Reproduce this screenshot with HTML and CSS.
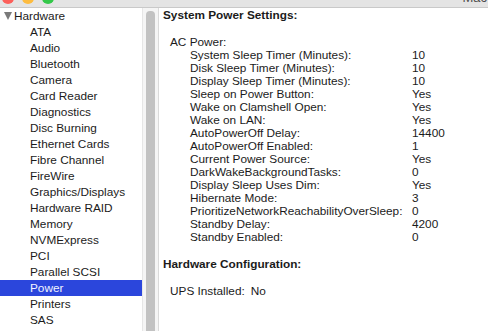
FILE: index.html
```html
<!DOCTYPE html>
<html lang="en">
<head>
  <meta charset="UTF-8">
  <title>System Information</title>
  <link rel="stylesheet" href="styles.css">
</head>
<body>
  <div class="titlebar">
    <div class="lights">
      <span class="light red"></span>
      <span class="light yellow"></span>
      <span class="light green"></span>
    </div>
    <span class="title">Mac</span>
  </div>

  <div class="window">
    <div class="sidebar">
      <div class="item group"><span class="arrow"></span>Hardware</div>
      <div class="item">ATA</div>
      <div class="item">Audio</div>
      <div class="item">Bluetooth</div>
      <div class="item">Camera</div>
      <div class="item">Card Reader</div>
      <div class="item">Diagnostics</div>
      <div class="item">Disc Burning</div>
      <div class="item">Ethernet Cards</div>
      <div class="item">Fibre Channel</div>
      <div class="item">FireWire</div>
      <div class="item">Graphics/Displays</div>
      <div class="item">Hardware RAID</div>
      <div class="item">Memory</div>
      <div class="item">NVMExpress</div>
      <div class="item">PCI</div>
      <div class="item">Parallel SCSI</div>
      <div class="item selected">Power</div>
      <div class="item">Printers</div>
      <div class="item">SAS</div>
    </div>
    <div class="scrollbar">
      <div class="thumb"></div>
    </div>

    <div class="content">
      <div class="heading">System Power Settings:</div>

      <div class="section">
        <div class="label">AC Power:</div>
        <div class="rows">
          <div class="row"><span class="key">System Sleep Timer (Minutes):</span><span>10</span></div>
          <div class="row"><span class="key">Disk Sleep Timer (Minutes):</span><span>10</span></div>
          <div class="row"><span class="key">Display Sleep Timer (Minutes):</span><span>10</span></div>
          <div class="row"><span class="key">Sleep on Power Button:</span><span>Yes</span></div>
          <div class="row"><span class="key">Wake on Clamshell Open:</span><span>Yes</span></div>
          <div class="row"><span class="key">Wake on LAN:</span><span>Yes</span></div>
          <div class="row"><span class="key">AutoPowerOff Delay:</span><span>14400</span></div>
          <div class="row"><span class="key">AutoPowerOff Enabled:</span><span>1</span></div>
          <div class="row"><span class="key">Current Power Source:</span><span>Yes</span></div>
          <div class="row"><span class="key">DarkWakeBackgroundTasks:</span><span>0</span></div>
          <div class="row"><span class="key">Display Sleep Uses Dim:</span><span>Yes</span></div>
          <div class="row"><span class="key">Hibernate Mode:</span><span>3</span></div>
          <div class="row"><span class="key">PrioritizeNetworkReachabilityOverSleep:</span><span>0</span></div>
          <div class="row"><span class="key">Standby Delay:</span><span>4200</span></div>
          <div class="row"><span class="key">Standby Enabled:</span><span>0</span></div>
        </div>
      </div>

      <div class="heading">Hardware Configuration:</div>

      <div class="section">
        <div class="pair"><span class="ups">UPS Installed:</span><span>No</span></div>
      </div>
    </div>
  </div>
</body>
</html>
```

FILE: styles.css
```css
* {
  box-sizing: border-box;
}
body {
  margin: 0;
  width: 488px;
  height: 331px;
  overflow: hidden;
  background: white;
  font-family: "Liberation Sans", Arial, sans-serif;
  font-size: 11.8px;
  color: #1b1b1b;
}
.titlebar {
  height: 8px;
  display: flex;
  justify-content: space-between;
  align-items: flex-end;
  overflow: hidden;
  background: #e4e4e4;
  border-bottom: 1px solid #c9c9c9;
}
.lights {
  display: flex;
  gap: 8px;
  padding-left: 2px;
  margin-bottom: 3px;
}
.light {
  width: 12px;
  height: 12px;
  border-radius: 50%;
}
.red {
  background: #fc605b;
}
.yellow {
  background: #fdbc40;
}
.green {
  background: #34c84a;
}
.title {
  font-size: 13px;
  line-height: 13px;
  color: #4d4d4d;
  margin-right: 1px;
  margin-bottom: 3px;
}
.window {
  display: flex;
  height: 323px;
}
.sidebar {
  width: 143px;
  border-right: 1px solid #e6e6e6;
}
.item {
  height: 16px;
  line-height: 16px;
  padding-left: 30px;
  white-space: nowrap;
}
.group {
  padding-left: 4px;
  display: flex;
  align-items: center;
  gap: 2px;
}
.arrow {
  width: 0;
  height: 0;
  border-left: 4px solid transparent;
  border-right: 4px solid transparent;
  border-top: 8px solid #7a7a7a;
}
.selected {
  background: #2b46dc;
  color: #f2f4ff;
}
.scrollbar {
  width: 16px;
  background: #f5f5f5;
  border-right: 1px solid #dadada;
  padding: 3px 3px 0 3px;
}
.thumb {
  height: 100%;
  background: #c2c2c2;
  border-radius: 4px 4px 0 0;
}
.content {
  flex: 1;
  padding: 1px 0 0 4px;
  line-height: 13px;
}
.heading {
  font-weight: bold;
}
.section {
  margin: 14px 0 14px 7px;
}
.rows {
  padding-left: 20px;
}
.row {
  display: flex;
}
.key {
  width: 222px;
  white-space: nowrap;
}
.ups {
  margin-right: 6px;
}
```
